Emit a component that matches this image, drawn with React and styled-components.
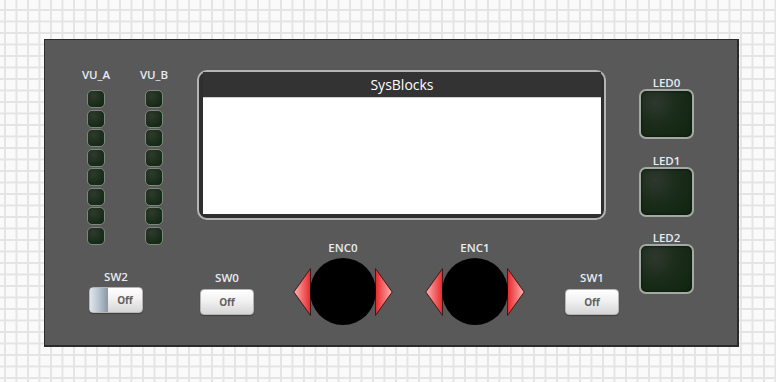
import React from "react";
import styled, { createGlobalStyle } from "styled-components";

const GlobalStyle = createGlobalStyle`
  html, body {
    margin: 0;
    width: 776px;
    height: 382px;
    overflow: hidden;
  }
  body {
    font-family: "Open Sans", "Noto Sans", Arial, sans-serif;
    background-color: #fafafa;
    background-image:
      linear-gradient(to right, #e4e4e4 2px, transparent 2px),
      linear-gradient(to bottom, #e4e4e4 2px, transparent 2px);
    background-size: 11.5px 11.5px;
    background-position: 4px 9px;
  }
`;

const Page = styled.div`
  padding: 39px 0 0 44px;
`;

const Panel = styled.div`
  box-sizing: border-box;
  width: 695px;
  height: 308px;
  background: #595959;
  border: 1px solid #2b2b2b;
  border-right-width: 2px;
  border-bottom-width: 2px;
  display: flex;
`;

const Label = styled.div`
  color: #e6ecf4;
  font-size: 11.5px;
  font-weight: 600;
  line-height: ${(p) => p.$lh || 14}px;
  text-align: center;
  white-space: nowrap;
`;

/* left column: VU meters + SW2 */
const LeftCol = styled.div`
  width: 152px;
  display: flex;
  flex-direction: column;
`;

const VuGroup = styled.div`
  display: flex;
  gap: 22px;
  padding: 28px 0 0 33px;
`;

const VuCol = styled.div`
  width: 36px;
  display: flex;
  flex-direction: column;
  align-items: center;
`;

const VuStack = styled.div`
  margin-top: 8px;
  display: flex;
  flex-direction: column;
  gap: 1.5px;
`;

const SmallLed = styled.div`
  box-sizing: border-box;
  width: 18px;
  height: 18px;
  border-radius: 5px;
  border: 1.5px solid #7b877b;
  background: radial-gradient(circle at 35% 30%, #2f3a2f 0%, #1b2e1b 55%, #102310 100%);
`;

/* switches */
const SwitchGroup = styled.div`
  display: flex;
  flex-direction: column;
  align-items: center;
  width: 54px;
  margin-top: ${(p) => p.$top || 0}px;
  margin-left: ${(p) => p.$left || 0}px;
`;

const SwitchBody = styled.div`
  box-sizing: border-box;
  margin-top: ${(p) => p.$gap || 4}px;
  width: 54px;
  height: 26px;
  border-radius: 4px;
  border: 1px solid #b5b5b5;
  background: linear-gradient(to bottom, #ffffff 0%, #f1f1f1 45%, #d6d6d6 100%);
  box-shadow: 0 1px 1px rgba(0, 0, 0, 0.3);
  display: flex;
  overflow: hidden;
`;

const Knob = styled.div`
  width: 17px;
  background: linear-gradient(to right, #dfe6ec 0%, #b9c5cf 50%, #8f9ca8 100%);
  border-right: 1px solid #8f9aa3;
`;

const OffText = styled.div`
  flex: 1;
  display: flex;
  align-items: center;
  justify-content: center;
  font-size: 10px;
  font-weight: 700;
  color: #5f5f5f;
`;

/* middle column */
const MidCol = styled.div`
  width: 423px;
  padding-top: 30px;
  display: flex;
  flex-direction: column;
`;

const Display = styled.div`
  box-sizing: border-box;
  width: 409px;
  height: 150px;
  border: 2px solid #b4b4b4;
  border-radius: 10px;
  background: #2f2f2f;
  padding: 0 3px 4px 4px;
  display: flex;
  flex-direction: column;
`;

const TitleBar = styled.div`
  height: 25px;
  color: #ffffff;
  font-size: 14px;
  line-height: 25px;
  text-align: center;
  background: #333333;
`;

const Screen = styled.div`
  flex: 1;
  background: #ffffff;
  border-top: 1px solid #cfcfcf;
`;

const ControlsRow = styled.div`
  margin-top: 21px;
  display: flex;
  align-items: flex-start;
`;

const EncoderGroup = styled.div`
  display: flex;
  flex-direction: column;
  align-items: center;
  margin-left: ${(p) => p.$left}px;
`;

const EncoderBody = styled.div`
  margin-top: 3px;
  display: flex;
  align-items: center;
`;

const EncoderKnob = styled.div`
  width: 66px;
  height: 67px;
  border-radius: 50%;
  background: #000000;
  margin: 0 -1px;
  position: relative;
  z-index: 1;
`;

/* right column */
const RightCol = styled.div`
  padding: 37px 0 0 19px;
  display: flex;
  flex-direction: column;
  gap: 15.5px;
`;

const LedGroup = styled.div`
  display: flex;
  flex-direction: column;
  align-items: center;
`;

const BigLed = styled.div`
  box-sizing: border-box;
  width: 55px;
  height: 50px;
  border-radius: 7px;
  border: 2px solid #a3a8a3;
  background: radial-gradient(circle at 28% 25%, #2e382e 0%, #1a2c1a 45%, #0e250e 100%);
  box-shadow: inset 0 0 3px rgba(0, 0, 0, 0.7);
`;

const Arrow = ({ dir, id }) => (
  <svg width="18" height="48" viewBox="0 0 18 48">
    <defs>
      <linearGradient id={id} x1={dir === "left" ? "0" : "1"} y1="0" x2={dir === "left" ? "1" : "0"} y2="0">
        <stop offset="0" stopColor="#ffb3b3" />
        <stop offset="1" stopColor="#e8262a" />
      </linearGradient>
    </defs>
    <polygon
      points={dir === "left" ? "17.5,0.5 0.8,24 17.5,47.5" : "0.5,0.5 17.2,24 0.5,47.5"}
      fill={`url(#${id})`}
      stroke="#3a1a1a"
      strokeWidth="1"
    />
  </svg>
);

const Switch = ({ name, toggle, top, left }) => (
  <SwitchGroup $top={top} $left={left}>
    <Label>{name}</Label>
    <SwitchBody $gap={toggle ? 3 : 4}>
      {toggle && <Knob />}
      <OffText>Off</OffText>
    </SwitchBody>
  </SwitchGroup>
);

const Encoder = ({ name, left }) => (
  <EncoderGroup $left={left}>
    <Label>{name}</Label>
    <EncoderBody>
      <Arrow dir="left" id={`${name}-l`} />
      <EncoderKnob />
      <Arrow dir="right" id={`${name}-r`} />
    </EncoderBody>
  </EncoderGroup>
);

const leds = [0, 1, 2, 3, 4, 5, 6, 7];

export default function App() {
  return (
    <>
      <GlobalStyle />
      <Page>
        <Panel>
          <LeftCol>
            <VuGroup>
              {["VU_A", "VU_B"].map((n) => (
                <VuCol key={n}>
                  <Label>{n}</Label>
                  <VuStack>
                    {leds.map((i) => (
                      <SmallLed key={i} />
                    ))}
                  </VuStack>
                </VuCol>
              ))}
            </VuGroup>
            <Switch name="SW2" toggle top={25} left={44} />
          </LeftCol>
          <MidCol>
            <Display>
              <TitleBar>SysBlocks</TitleBar>
              <Screen />
            </Display>
            <ControlsRow>
              <Switch name="SW0" top={30} left={3} />
              <Encoder name="ENC0" left={39} />
              <Encoder name="ENC1" left={32} />
              <Switch name="SW1" top={30} left={40} />
            </ControlsRow>
          </MidCol>
          <RightCol>
            {["LED0", "LED1", "LED2"].map((n) => (
              <LedGroup key={n}>
                <Label $lh={12}>{n}</Label>
                <BigLed />
              </LedGroup>
            ))}
          </RightCol>
        </Panel>
      </Page>
    </>
  );
}
